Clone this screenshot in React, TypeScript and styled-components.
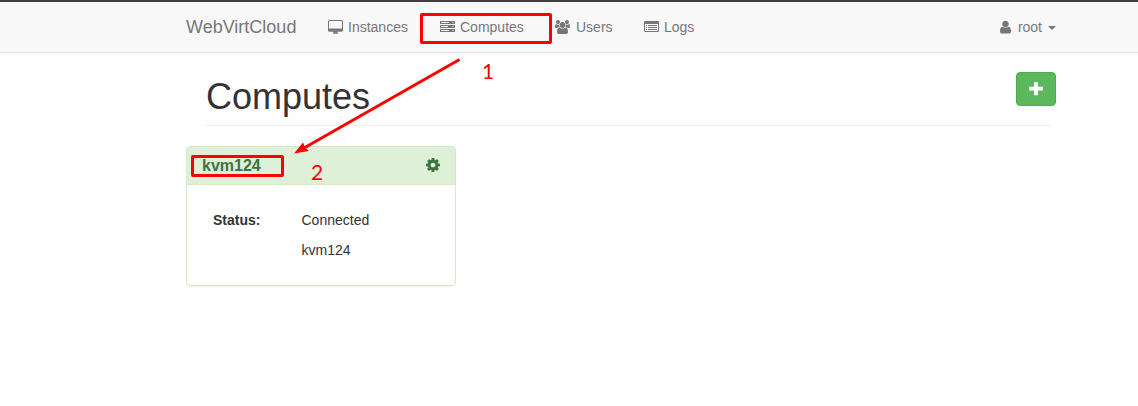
import React from "react";
import styled, { createGlobalStyle } from "styled-components";

const GlobalStyle = createGlobalStyle`
  *, *::before, *::after { box-sizing: border-box; }
  body {
    margin: 0;
    background: #fff;
    color: #333;
    font: 14px/20px "Liberation Sans", Arial, sans-serif;
    overflow: hidden;
  }
  #root { height: 406px; }
`;

const Page = styled.div`
  position: relative;
  height: 406px;
  border-top: 2px solid #403e41;
`;

const Navbar = styled.nav`
  height: 51px;
  background: #f8f8f8;
  border-bottom: 1px solid #e7e7e7;
  padding: 0 82px 0 186px;
  display: flex;
  align-items: center;
  color: #777;
`;

const Brand = styled.a`
  font-size: 18px;
  width: 142px;
`;

const NavItem = styled.a<{ $width?: number }>`
  display: flex;
  align-items: center;
  width: ${(p) => (p.$width ? `${p.$width}px` : "auto")};
`;

const NavIcon = styled.svg<{ $w: number; $gap: number }>`
  width: ${(p) => p.$w}px;
  height: 14px;
  margin-right: ${(p) => p.$gap}px;
  fill: currentColor;
`;

const Account = styled(NavItem)`
  margin-left: auto;
`;

const Caret = styled.span`
  margin-left: 6px;
  margin-top: 2px;
  border-top: 4px solid #777;
  border-left: 4px solid transparent;
  border-right: 4px solid transparent;
`;

const Main = styled.main`
  width: 870px;
  margin-left: 186px;
`;

const PageHeader = styled.header`
  display: flex;
  justify-content: space-between;
  align-items: flex-start;
  height: 73px;
  margin: 0 5px 20px 20px;
  border-bottom: 1px solid #eee;
`;

const Title = styled.h1`
  margin: 24px 0 0;
  font-size: 36px;
  line-height: 40px;
  font-weight: 400;
`;

const AddButton = styled.button`
  width: 40px;
  height: 34px;
  margin: 19px -5px 0 0;
  padding: 0 1px 0 0;
  border: 1px solid #4cae4c;
  border-radius: 4px;
  background: #5cb85c;
  display: flex;
  align-items: center;
  justify-content: center;
`;

const Panel = styled.section`
  width: 270px;
  height: 140px;
  border: 1px solid #d6e9c6;
  border-radius: 4px;
  box-shadow: 0 1px 1px rgba(0, 0, 0, 0.05);
`;

const PanelHeading = styled.div`
  height: 38px;
  padding: 0 15px;
  display: flex;
  align-items: center;
  justify-content: space-between;
  background: #dff0d8;
  border-bottom: 1px solid #d6e9c6;
  border-radius: 3px 3px 0 0;
  color: #3c763d;
`;

const PanelTitle = styled.h3`
  margin: 0;
  font-size: 16px;
  line-height: 20px;
`;

const Gear = styled.svg`
  width: 14px;
  height: 14px;
  margin-bottom: 1px;
  fill: currentColor;
`;

const Details = styled.dl`
  margin: 0;
  padding: 25px 26px;
  display: grid;
  grid-template-columns: 88.5px 1fr;
  row-gap: 10px;
`;

const Term = styled.dt`
  font-weight: 700;
`;

const Value = styled.dd`
  margin: 0;
  grid-column: 2;
`;

const Highlight = styled.div<{ $x: number; $y: number; $w: number; $h: number }>`
  position: absolute;
  left: ${(p) => p.$x}px;
  top: ${(p) => p.$y - 2}px;
  width: ${(p) => p.$w}px;
  height: ${(p) => p.$h}px;
  border: 3px solid #f00;
  border-radius: 2px;
`;

const Arrow = styled.svg`
  position: absolute;
  left: 290px;
  top: 48px;
  width: 180px;
  height: 110px;
`;

const Step = styled.span<{ $x: number; $y: number }>`
  position: absolute;
  left: ${(p) => p.$x}px;
  top: ${(p) => p.$y - 2}px;
  color: #f00;
  font: 21px/24px Lato, sans-serif;
`;

const cogPath =
  "M1024 896q0-106-75-181t-181-75-181 75-75 181 75 181 181 75 181-75 75-181zm512-109v222q0 12-8 23t-20 13l-185 28q-19 54-39 91 35 50 107 138 10 12 10 25t-9 23q-27 37-99 108t-94 71q-12 0-26-9l-138-108q-44 23-91 38-16 136-29 186-7 28-36 28h-222q-14 0-24.5-8.5t-11.5-21.5l-28-184q-49-16-90-37l-141 107q-10 9-25 9-14 0-25-11-126-114-165-168-7-10-7-23 0-12 8-23 15-21 51-66.5t54-70.5q-27-50-41-99l-183-27q-13-2-21-12.5t-8-23.5v-222q0-12 8-23t19-13l186-28q14-46 39-92-40-57-107-138-10-12-10-24 0-10 9-23 26-36 98.5-107.5t94.5-71.5q13 0 26 10l138 107q44-23 91-38 16-136 29-186 7-28 36-28h222q14 0 24.5 8.5t11.5 21.5l28 184q49 16 90 37l142-107q9-9 24-9 13 0 25 10 129 119 165 170 7 8 7 22 0 12-8 23-15 21-51 66.5t-54 70.5q26 50 41 98l183 28q13 2 21 12.5t8 23.5z";
const desktopPath =
  "M1792 992v-832q0-13-9.5-22.5t-22.5-9.5h-1600q-13 0-22.5 9.5t-9.5 22.5v832q0 13 9.5 22.5t22.5 9.5h1600q13 0 22.5-9.5t9.5-22.5zm128-832v1088q0 66-47 113t-113 47h-544q0 37 16 77.5t32 71 16 43.5q0 26-19 45t-45 19h-512q-26 0-45-19t-19-45q0-14 16-44t32-70 16-78h-544q-66 0-113-47t-47-113v-1088q0-66 47-113t113-47h1600q66 0 113 47t47 113z";
const usersPath =
  "M593 896q-162 5-265 128h-134q-82 0-138-40.5t-56-118.5q0-353 124-353 6 0 43.5 21t97.5 42.5 119 21.5q67 0 133-23-5 37-5 66 0 139 81 256zm1071 637q0 120-73 189.5t-194 69.5h-874q-121 0-194-69.5t-73-189.5q0-53 3.5-103.5t14-109 26.5-108.5 43-97.5 62-81 85.5-53.5 111.5-20q10 0 43 21.5t73 48 107 48 135 21.5 135-21.5 107-48 73-48 43-21.5q61 0 111.5 20t85.5 53.5 62 81 43 97.5 26.5 108.5 14 109 3.5 103.5zm-1024-1277q0 106-75 181t-181 75-181-75-75-181 75-181 181-75 181 75 75 181zm704 384q0 159-112.5 271.5t-271.5 112.5-271.5-112.5-112.5-271.5 112.5-271.5 271.5-112.5 271.5 112.5 112.5 271.5zm576 225q0 78-56 118.5t-138 40.5h-134q-103-123-265-128 81-117 81-256 0-29-5-66 66 23 133 23 59 0 119-21.5t97.5-42.5 43.5-21q124 0 124 353zm-128-609q0 106-75 181t-181 75-181-75-75-181 75-181 181-75 181 75 75 181z";
const userPath =
  "M1536 1399q0 109-62.5 187t-150.5 78h-854q-88 0-150.5-78t-62.5-187q0-85 8.5-160.5t31.5-152 58.5-131 94-89 134.5-34.5q131 128 313 128t313-128q76 0 134.5 34.5t94 89 58.5 131 31.5 152 8.5 160.5zm-256-887q0 159-112.5 271.5t-271.5 112.5-271.5-112.5-112.5-271.5 112.5-271.5 271.5-112.5 271.5 112.5 112.5 271.5z";

export default function App() {
  return (
    <>
      <GlobalStyle />
      <Page>
        <Navbar>
          <Brand>WebVirtCloud</Brand>
          <NavItem $width={112}>
            <NavIcon $w={15} $gap={5} viewBox="0 0 1920 1680" preserveAspectRatio="none">
              <path d={desktopPath} />
            </NavIcon>
            Instances
          </NavItem>
          <NavItem $width={115}>
            <NavIcon $w={15} $gap={5} viewBox="0 0 15 14">
              <path fillRule="evenodd" d="M0 1h15v3H0zM1 2v1h8V2zM12.500 2v1h1V2zM0 5h15v3H0zM1 6v1h7v-1zM12.500 6v1h1v-1zM0 9h15v3H0zM1 10v1h8v-1zM12.500 10v1h1v-1z" />
            </NavIcon>
            Computes
          </NavItem>
          <NavItem $width={89}>
            <NavIcon $w={15} $gap={6} viewBox="0 0 1920 1792" preserveAspectRatio="none">
              <path d={usersPath} />
            </NavIcon>
            Users
          </NavItem>
          <NavItem>
            <NavIcon $w={15} $gap={5} viewBox="0 0 15 14">
              <path fillRule="evenodd" d="M1 1h13q1 0 1 1v9q0 1-1 1H1q-1 0-1-1V2q0-1 1-1zM1 4v7h13V4zM2 5h1v1H2zM4 5h9v1H4zM2 7h1v1H2zM4 7h9v1H4zM2 9h1v1H2zM4 9h9v1H4z" />
            </NavIcon>
            Logs
          </NavItem>
          <Account>
            <NavIcon $w={11} $gap={7} viewBox="256 32 1280 1680" preserveAspectRatio="none">
              <path d={userPath} />
            </NavIcon>
            root
            <Caret />
          </Account>
        </Navbar>
        <Main>
          <PageHeader>
            <Title>Computes</Title>
            <AddButton aria-label="Add compute">
              <svg width="14" height="14" viewBox="0 0 14 14" fill="#fff">
                <path d="M5 0h4v4.800h5v3.700H9v4.800H5V8.500H0V4.800h5z" />
              </svg>
            </AddButton>
          </PageHeader>
          <Panel>
            <PanelHeading>
              <PanelTitle>kvm124</PanelTitle>
              <Gear viewBox="0 128 1536 1536"><path d={cogPath} /></Gear>
            </PanelHeading>
            <Details>
              <Term>Status:</Term>
              <Value>Connected</Value>
              <Value>kvm124</Value>
            </Details>
          </Panel>
        </Main>
        <Highlight $x={420} $y={13} $w={132} $h={31} />
        <Highlight $x={191} $y={155} $w={93} $h={22} />
        <Arrow viewBox="290 50 180 110">
          <path d="M459.500 59.500L304 148" stroke="#f00" strokeWidth="3" fill="none" />
          <path d="M294 153.500L303 142.500L305 147L308.500 151z" fill="#f00" />
        </Arrow>
        <Step $x={482} $y={59}>1</Step>
        <Step $x={311} $y={160}>2</Step>
      </Page>
    </>
  );
}
